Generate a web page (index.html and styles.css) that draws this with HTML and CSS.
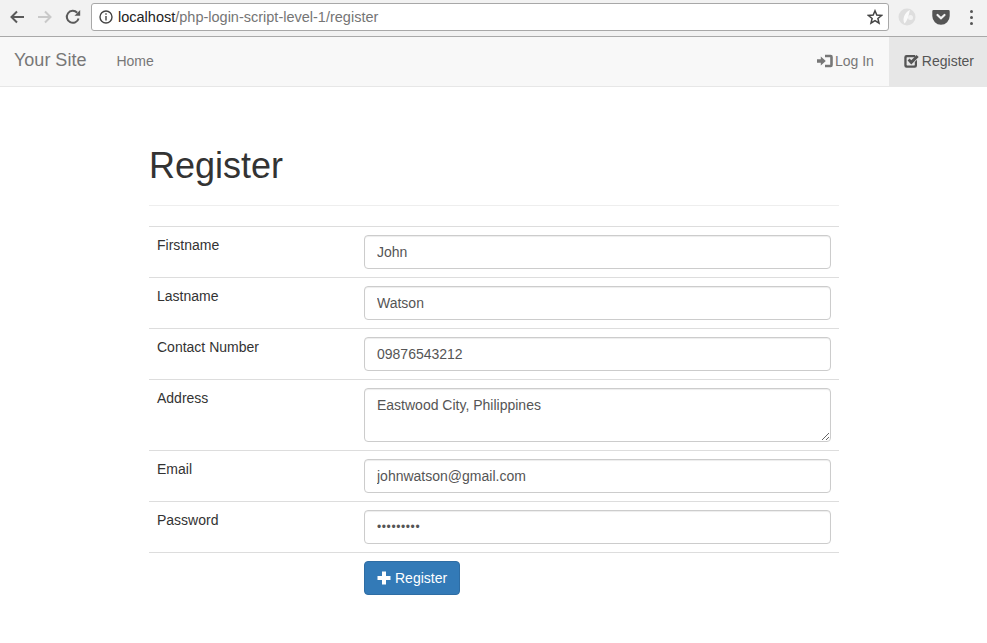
FILE: index.html
```html
<!DOCTYPE html>
<html lang="en">
<head>
<meta charset="UTF-8" />
<meta name="viewport" content="width=device-width, initial-scale=1.0"/>
<title>Register</title>
<link rel="stylesheet" href="styles.css">
</head>
<body>

<!-- Browser toolbar -->
<div class="chrome-bar">
    <svg class="tool-icon back" viewBox="0 0 16 16"><path d="M15 8H3M8 2.500 2.500 8 8 13.500"/></svg>
    <svg class="tool-icon forward" viewBox="0 0 16 16"><path d="M1 8h12M8 2.500 13.500 8 8 13.500"/></svg>
    <svg class="tool-icon reload" viewBox="0 0 16 16"><path d="M13.600 9.500A6 6 0 1 1 12.200 3.700"/><path class="fill" d="M9.500 6.800h5.700V1.100z"/></svg>
    <div class="address-bar">
        <svg class="info-icon" viewBox="0 0 14 14"><circle cx="7" cy="7" r="6"/><path d="M7 6v4.400M7 3.300v1.500"/></svg>
        <span class="url"><span class="host">localhost</span>/php-login-script-level-1/register</span>
        <svg class="star-icon" viewBox="0 0 16 16"><path d="M8 1.800l1.800 4.300 4.700.4-3.600 3 1.100 4.600L8 11.600l-4 2.500 1.100-4.600-3.600-3 4.700-.4z"/></svg>
    </div>
    <svg class="ext-icon" viewBox="0 0 18 18"><circle cx="9" cy="9" r="8.500" fill="#dedede"/><path d="M6.500 15.500C4 11 6.500 4.500 12 2c-1.500 4.500-1.500 9.500-5.500 13.500z" fill="#fafafa"/><circle cx="12.500" cy="9.500" r="2.500" fill="#f2f2f2"/></svg>
    <svg class="pocket-icon" viewBox="0 0 18 16"><path d="M1.500 1h15a1.200 1.200 0 0 1 1.200 1.200V7A8.700 8.700 0 0 1 .3 7V2.200A1.200 1.200 0 0 1 1.500 1z" fill="#555"/><path d="M5.500 6 9 9.300 12.500 6" fill="none" stroke="#f2f2f2" stroke-width="2.200" stroke-linecap="round"/></svg>
    <div class="menu-dots"><i></i><i></i><i></i></div>
</div>

<nav class="navbar">
    <a class="brand" href="#">Your Site</a>
    <a class="nav-link" href="#">Home</a>
    <div class="nav-right">
        <a class="nav-link login" href="#">
            <svg class="glyph" viewBox="0 0 16 14"><path d="M0 5.300h3.800V2.400L8.800 7l-5 4.600V8.700H0z"/><path d="M8 .8h5.500A2.200 2.200 0 0 1 15.800 3v8a2.200 2.200 0 0 1-2.300 2.200H8v-2.400h5.200V3.200H8z"/></svg>Log In
        </a>
        <a class="nav-link active" href="#">
            <svg class="glyph" viewBox="0 0 15 14"><path d="M2.500 1h8.700v2.200H3.200a.6.600 0 0 0-.6.600v7a.6.600 0 0 0 .6.600h7a.6.600 0 0 0 .6-.6V8l2.200-2.200v5.700a2.200 2.200 0 0 1-2.200 2.200H2.500A2.200 2.200 0 0 1 .3 11.500V3.200A2.200 2.200 0 0 1 2.500 1z"/><path d="M3.600 6.400 5.500 4.400 7.300 6.300 12.500 1 14.700 3.100 7.300 10.400z"/></svg>Register
        </a>
    </div>
</nav>

<div class="container">
    <div class="page-header">
        <h1>Register</h1>
    </div>

    <form>
        <table class="form-table">
            <tr>
                <td class="label-cell">Firstname</td>
                <td><input class="form-control" type="text" value="John"></td>
            </tr>
            <tr>
                <td class="label-cell">Lastname</td>
                <td><input class="form-control" type="text" value="Watson"></td>
            </tr>
            <tr>
                <td class="label-cell">Contact Number</td>
                <td><input class="form-control" type="text" value="09876543212"></td>
            </tr>
            <tr>
                <td class="label-cell">Address</td>
                <td><textarea class="form-control address">Eastwood City, Philippines</textarea></td>
            </tr>
            <tr>
                <td class="label-cell">Email</td>
                <td><input class="form-control" type="text" value="johnwatson@gmail.com"></td>
            </tr>
            <tr>
                <td class="label-cell">Password</td>
                <td><input class="form-control password" type="password" value="123456789"></td>
            </tr>
            <tr>
                <td></td>
                <td>
                    <button class="btn-primary" type="button">
                        <svg class="plus" viewBox="0 0 14 14"><path d="M5 .5h4V5h4.500v4H9v4.500H5V9H.5V5H5z"/></svg>
                        Register
                    </button>
                </td>
            </tr>
        </table>
    </form>
</div>

</body>
</html>
```

FILE: styles.css
```css
* {
    box-sizing: border-box;
}

body {
    font-family: "Liberation Sans", Arial, sans-serif;
    font-size: 14px;
    line-height: 20px;
    margin: 0;
    background: #fff;
    color: #333;
}

a {
    text-decoration: none;
}

/* Browser toolbar */
.chrome-bar {
    display: flex;
    align-items: center;
    height: 37px;
    padding: 0 0 2px 9px;
    background: #f2f2f2;
    border-bottom: 1px solid #a9a9a9;
}

.tool-icon {
    width: 16px;
    height: 16px;
    margin-right: 12px;
    fill: none;
    stroke: #5a5a5a;
    stroke-width: 2;
    flex: none;
}

.tool-icon.forward {
    stroke: #c9c9c9;
}

.tool-icon .fill {
    fill: #5a5a5a;
    stroke: none;
}

.tool-icon.reload {
    margin-right: 10px;
}

.address-bar {
    display: flex;
    align-items: center;
    width: 798px;
    height: 28px;
    padding: 0 5px 0 7px;
    background: #fff;
    border: 1px solid #a8a8a8;
    border-radius: 3px;
}

.info-icon {
    width: 14px;
    height: 14px;
    margin-right: 5px;
    fill: none;
    stroke: #444;
    stroke-width: 1.4;
}

.url {
    flex: 1;
    color: #757575;
    font-size: 14.5px;
}

.host {
    color: #222;
}

.star-icon {
    width: 16px;
    height: 16px;
    fill: none;
    stroke: #444;
    stroke-width: 1.5;
}

.ext-icon {
    width: 18px;
    height: 18px;
    margin-left: 9px;
}

.pocket-icon {
    width: 18px;
    height: 16px;
    margin-left: 16px;
}

.menu-dots {
    display: flex;
    flex-direction: column;
    gap: 3px;
    margin-left: 20px;
}

.menu-dots i {
    display: block;
    width: 3px;
    height: 3px;
    border-radius: 50%;
    background: #555;
}

/* Navbar */
.navbar {
    display: flex;
    align-items: stretch;
    height: 50px;
    background: #f8f8f8;
    border-bottom: 1px solid #e7e7e7;
}

.brand {
    padding: 13px 15px 0 14px;
    font-size: 18px;
    color: #777;
}

.nav-link {
    display: flex;
    align-items: center;
    padding: 0 15px 2px;
    color: #777;
}

.nav-right {
    display: flex;
    margin-left: auto;
}

.nav-link.active {
    background: #e7e7e7;
    color: #555;
    padding: 0 13px 2px 15px;
}

.glyph {
    width: 15px;
    height: 14px;
    margin-right: 3px;
    fill: currentColor;
}

.login .glyph {
    width: 16px;
    margin-right: 2px;
}

/* Content */
.container {
    width: 690px;
    margin-left: 149px;
}

.page-header {
    margin-top: 59px;
    padding-bottom: 9px;
    border-bottom: 1px solid #eee;
}

h1 {
    margin: 20px 0 10px;
    font-size: 36px;
    font-weight: 500;
    line-height: 40px;
}

.form-table {
    width: 690px;
    margin-top: 20px;
    border-collapse: collapse;
}

.form-table td {
    padding: 8px;
    border-top: 1px solid #ddd;
    vertical-align: top;
    line-height: 20px;
}

.form-table .label-cell {
    width: 207px;
}

.form-control {
    display: block;
    width: 100%;
    height: 34px;
    padding: 6px 12px;
    font-family: inherit;
    font-size: 14px;
    line-height: 20px;
    color: #555;
    background: #fff;
    border: 1px solid #ccc;
    border-radius: 4px;
    box-shadow: inset 0 1px 1px rgba(0,0,0,0.075);
}

.form-control.password {
    font-size: 12px;
    letter-spacing: 0.6px;
}

textarea.address {
    height: 54px;
}

.btn-primary {
    display: inline-flex;
    align-items: center;
    gap: 4px;
    height: 34px;
    padding: 6px 12px;
    font-family: inherit;
    font-size: 14px;
    color: #fff;
    background: #337ab7;
    border: 1px solid #2e6da4;
    border-radius: 4px;
}

.plus {
    width: 14px;
    height: 14px;
    fill: #fff;
}
```
